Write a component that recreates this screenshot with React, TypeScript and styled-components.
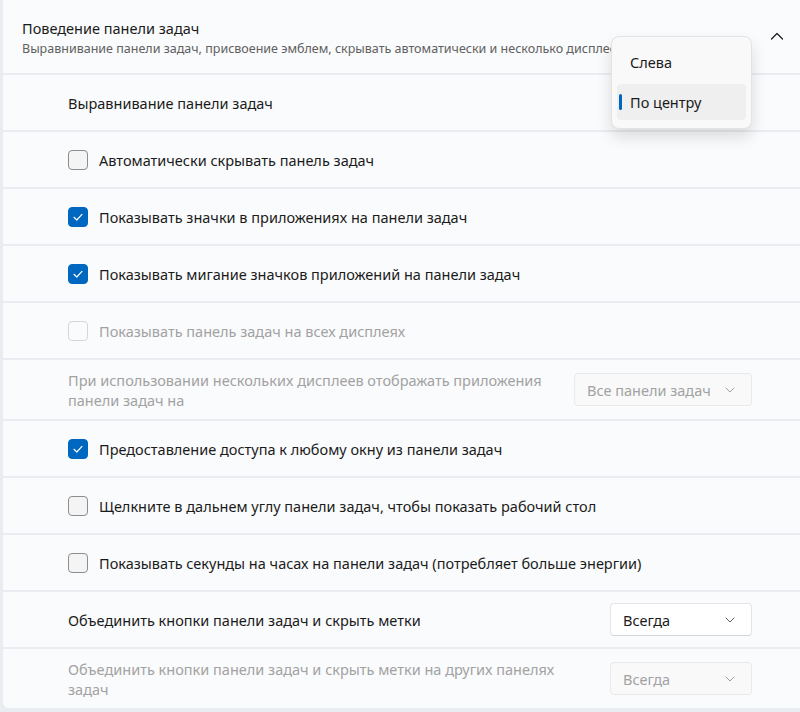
import styled, { createGlobalStyle } from "styled-components"

const GlobalStyle = createGlobalStyle`
	html, body {
		margin: 0;
		padding: 0;
		background: #e9edf2;
		overflow: hidden;
	}
	body {
		font-family: "Noto Sans", "Open Sans", sans-serif;
		color: #1b1b1b;
	}
`

const Page = styled.div`
	position: relative;
	width: 822px;
	height: 712px;
	padding-left: 3px;
	display: flex;
	flex-direction: column;
	gap: 2px;
`

const Header = styled.div`
	height: 73px;
	box-sizing: border-box;
	background: #fafbfc;
	display: flex;
	align-items: flex-start;
	padding: 18px 40px 0 19px;
`

const HeaderText = styled.div`
	flex: 1;
	display: flex;
	flex-direction: column;
	gap: 3px;
	min-width: 0;
`

const Title = styled.div`
	font-size: 14.5px;
	line-height: 20px;
	color: #1b1b1b;
`

const Subtitle = styled.div`
	font-size: 12.5px;
	line-height: 16px;
	color: #606060;
	white-space: nowrap;
	overflow: hidden;
`

const Toggle = styled.div`
	width: 16px;
	height: 16px;
	margin-top: 10px;
	display: grid;
	place-items: center;
`

const Row = styled.div<{ $tall?: boolean; $last?: boolean }>`
	height: ${(p) => (p.$tall ? 59 : 55)}px;
	box-sizing: border-box;
	background: #fafbfc;
	display: flex;
	align-items: center;
	padding: 0 73px 0 65px;
	border-radius: ${(p) => (p.$last ? "0 0 0 6px" : "0")};
`

const Label = styled.div<{ $disabled?: boolean; $wrap?: number }>`
	flex: ${(p) => (p.$wrap ? "none" : "1")};
	width: ${(p) => (p.$wrap ? `${p.$wrap}px` : "auto")};
	font-size: 14.5px;
	line-height: 20px;
	color: ${(p) => (p.$disabled ? "#a2a2a2" : "#1b1b1b")};
`

const Box = styled.div<{ $checked?: boolean; $disabled?: boolean }>`
	width: 20px;
	height: 20px;
	box-sizing: border-box;
	border-radius: 4px;
	margin: 0 11px 0 0;
	flex: none;
	display: grid;
	place-items: center;
	background: ${(p) => (p.$checked ? "#0067c0" : p.$disabled ? "#fafbfc" : "#f4f4f5")};
	border: 1px solid
		${(p) => (p.$checked ? "#0067c0" : p.$disabled ? "#d6d6d6" : "#8d8d8d")};
`

const Spacer = styled.div`
	flex: 1;
`

const Select = styled.div<{ $width: number; $disabled?: boolean }>`
	width: ${(p) => p.$width}px;
	height: 33px;
	box-sizing: border-box;
	flex: none;
	border-radius: 4px;
	display: flex;
	align-items: center;
	justify-content: space-between;
	padding: 0 16px 0 12px;
	font-size: 14.5px;
	color: ${(p) => (p.$disabled ? "#a2a2a2" : "#1b1b1b")};
	background: ${(p) => (p.$disabled ? "#f9f9fa" : "#ffffff")};
	border: 1px solid ${(p) => (p.$disabled ? "#e9e9eb" : "#e4e4e6")};
	border-bottom-color: ${(p) => (p.$disabled ? "#e9e9eb" : "#d4d4d6")};
`

const Popup = styled.div`
	position: absolute;
	left: 611px;
	top: 36px;
	width: 141px;
	box-sizing: border-box;
	padding: 7px 5px 8px;
	display: flex;
	flex-direction: column;
	gap: 4px;
	background: #f9f9f9;
	border: 1px solid #e3e3e3;
	border-radius: 8px;
	box-shadow: 0 8px 16px rgba(0, 0, 0, 0.13);
`

const Option = styled.div<{ $selected?: boolean }>`
	position: relative;
	height: 36px;
	border-radius: 4px;
	display: flex;
	align-items: center;
	padding-left: 13px;
	font-size: 14.5px;
	color: #1b1b1b;
	background: ${(p) => (p.$selected ? "#efeff0" : "transparent")};

	&::before {
		content: "";
		display: ${(p) => (p.$selected ? "block" : "none")};
		position: absolute;
		left: 2px;
		top: 10px;
		width: 3px;
		height: 16px;
		border-radius: 2px;
		background: #0067c0;
	}
`

function Check() {
	return (
		<svg width="12" height="12" viewBox="0 0 12 12">
			<path d="M2 6.3 L4.8 9 L10 3.4" fill="none" stroke="#fff" strokeWidth="1.2" strokeLinecap="round" strokeLinejoin="round" />
		</svg>
	)
}

function ChevronDown({ color }: { color: string }) {
	return (
		<svg width="10" height="6" viewBox="0 0 10 6">
			<path d="M1 1 L5 5 L9 1" fill="none" stroke={color} strokeWidth="1" strokeLinecap="round" strokeLinejoin="round" />
		</svg>
	)
}

function ChevronUp() {
	return (
		<svg width="14" height="8" viewBox="0 0 14 8">
			<path d="M1.5 7 L7 1.5 L12.5 7" fill="none" stroke="#1b1b1b" strokeWidth="1.2" strokeLinecap="round" strokeLinejoin="round" />
		</svg>
	)
}

interface CheckRowProps {
	text: string
	checked?: boolean
	disabled?: boolean
}

function CheckRow({ text, checked, disabled }: CheckRowProps) {
	return (
		<Row>
			<Box $checked={checked} $disabled={disabled}>
				{checked && <Check />}
			</Box>
			<Label $disabled={disabled}>{text}</Label>
		</Row>
	)
}

export default function App() {
	return (
		<>
			<GlobalStyle />
			<Page>
				<Header>
					<HeaderText>
						<Title>Поведение панели задач</Title>
						<Subtitle>
							Выравнивание панели задач, присвоение эмблем, скрывать автоматически и несколько дисплеев
						</Subtitle>
					</HeaderText>
					<Toggle>
						<ChevronUp />
					</Toggle>
				</Header>
				<Row>
					<Label>Выравнивание панели задач</Label>
				</Row>
				<CheckRow text="Автоматически скрывать панель задач" />
				<CheckRow text="Показывать значки в приложениях на панели задач" checked />
				<CheckRow text="Показывать мигание значков приложений на панели задач" checked />
				<CheckRow text="Показывать панель задач на всех дисплеях" disabled />
				<Row $tall>
					<Label $disabled $wrap={500}>
						При использовании нескольких дисплеев отображать приложения панели задач на
					</Label>
					<Spacer />
					<Select $width={178} $disabled>
						Все панели задач
						<ChevronDown color="#a2a2a2" />
					</Select>
				</Row>
				<CheckRow text="Предоставление доступа к любому окну из панели задач" checked />
				<CheckRow text="Щелкните в дальнем углу панели задач, чтобы показать рабочий стол" />
				<CheckRow text="Показывать секунды на часах на панели задач (потребляет больше энергии)" />
				<Row>
					<Label>Объединить кнопки панели задач и скрыть метки</Label>
					<Select $width={142}>
						Всегда
						<ChevronDown color="#5c5c5c" />
					</Select>
				</Row>
				<Row $tall $last>
					<Label $disabled $wrap={500}>
						Объединить кнопки панели задач и скрыть метки на других панелях задач
					</Label>
					<Spacer />
					<Select $width={142} $disabled>
						Всегда
						<ChevronDown color="#a2a2a2" />
					</Select>
				</Row>
				<Popup>
					<Option>Слева</Option>
					<Option $selected>По центру</Option>
				</Popup>
			</Page>
		</>
	)
}
